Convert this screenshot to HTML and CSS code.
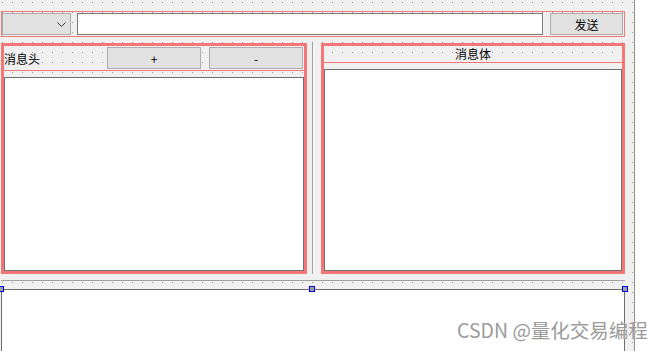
FILE: index.html
```html
<!DOCTYPE html>
<html lang="zh-CN">
<head>
  <meta charset="UTF-8">
  <meta name="viewport" content="width=device-width, initial-scale=1.0">
  <title>消息发送</title>
  <link rel="stylesheet" href="styles.css">
</head>
<body>
  <div class="form">
    <!-- 顶部：选择 + 输入 + 发送 -->
    <div class="toolbar">
      <div class="combo">
        <svg width="9" height="5" viewBox="0 0 9 5"><polyline points="0.5,0.5 4.5,4.5 8.5,0.5" fill="none" stroke="#3c3c3c" stroke-width="1"/></svg>
      </div>
      <div class="line-edit"></div>
      <button class="btn send">发送</button>
    </div>

    <!-- 中部：分割器 -->
    <div class="split">
      <div class="panel left">
        <div class="head-row">
          <span class="head-label">消息头</span>
          <button class="btn small">+</button>
          <button class="btn small">-</button>
        </div>
        <div class="text-edit"></div>
      </div>
      <div class="splitter"><div class="grip"></div></div>
      <div class="panel right">
        <div class="title">消息体</div>
        <div class="text-edit"></div>
      </div>
    </div>

    <div class="hline"></div>

    <div class="bottom-widget">
      <span class="handle h-left"></span>
      <span class="handle h-mid"></span>
      <span class="handle h-right"></span>
    </div>
  </div>
  <div class="watermark">CSDN @量化交易编程</div>
</body>
</html>
```

FILE: styles.css
```css
* {
  margin: 0;
  padding: 0;
  box-sizing: border-box;
}
body {
  width: 663px;
  height: 351px;
  overflow: hidden;
  background-color: #fff;
  font-family: "Noto Sans CJK SC", "Noto Sans", sans-serif;
  font-size: 12px;
  color: #000;
  position: relative;
}
.form {
  width: 635px;
  height: 351px;
  padding: 11px 0 0 1px;
  border-right: 1px solid #8f8f8f;
  background:
    linear-gradient(90deg, transparent 1px, #f0f0f0 1px),
    linear-gradient(transparent 1px, #f0f0f0 1px),
    #9a9a9a;
  background-size: 10px 10px;
  background-position: 2px 2px;
}

/* 顶部一行 */
.toolbar {
  display: flex;
  width: 624px;
  height: 26px;
  padding: 1px 1px 1px 0;
  border: 1px solid #f47878;
}
.combo {
  width: 69px;
  display: flex;
  align-items: center;
  justify-content: flex-end;
  padding-right: 4px;
  background-color: #e1e1e1;
  border: 1px solid #adadad;
}
.line-edit {
  flex: 1;
  margin: 0 7px 0 6px;
  background-color: #fff;
  border: 1px solid #7a7a7a;
}
.btn {
  font-family: inherit;
  font-size: 12px;
  color: #000;
  background-color: #e1e1e1;
  border: 1px solid #adadad;
}
.send {
  width: 73px;
}

/* 中部 */
.split {
  display: flex;
  width: 624px;
  height: 231px;
  margin-top: 6px;
}
.panel {
  display: flex;
  flex-direction: column;
  border: 3px solid #f47676;
}
.left {
  width: 306px;
}
.right {
  width: 304px;
}
.head-row {
  display: flex;
  align-items: center;
  gap: 8px;
  height: 25px;
  padding-right: 1px;
  border-bottom: 1px solid #f47878;
}
.head-label {
  flex: 1;
}
.small {
  width: 94px;
  height: 22px;
}
.title {
  height: 17px;
  line-height: 16px;
  text-align: center;
  border-bottom: 1px solid #f47878;
}
.text-edit {
  flex: 1;
  margin-top: 6px;
  background-color: #fff;
  border: 1px solid #6f6f6f;
}
.splitter {
  width: 14px;
  padding-left: 5px;
  background-color: #f0f0f0;
}
.grip {
  width: 2px;
  height: 100%;
  border-left: 1px solid #a0a0a0;
  border-right: 1px solid #fff;
}

.hline {
  width: 624px;
  margin-top: 6px;
  border-top: 1px solid #a0a0a0;
}

/* 底部选中的部件 */
.bottom-widget {
  position: relative;
  width: 624px;
  height: 62px;
  margin-top: 8px;
  background-color: #fff;
  border: 1px solid #6f6f6f;
  border-bottom: none;
}
.handle {
  position: absolute;
  top: -4px;
  width: 6px;
  height: 6px;
  background-color: #a0a0a0;
  border: 1px solid #0000e6;
}
.h-left {
  left: -4px;
}
.h-mid {
  left: calc(50% - 4px);
}
.h-right {
  right: -4px;
}

.watermark {
  position: absolute;
  left: 457px;
  top: 320px;
  font-size: 19.5px;
  line-height: 19px;
  color: #9b9b9b;
  text-shadow: 0 0 1px #fff;
  white-space: nowrap;
}
```
